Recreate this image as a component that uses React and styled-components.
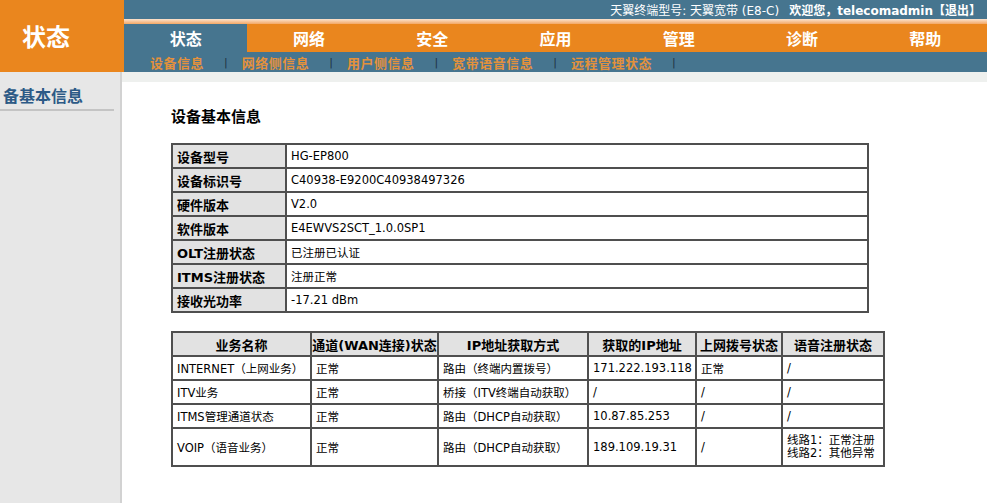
import React from 'react';
import styled, { createGlobalStyle } from 'styled-components';

const CN = `"DejaVu Sans", "Noto Sans CJK SC", sans-serif`;

const GlobalStyle = createGlobalStyle`
  html, body {
    margin: 0;
    padding: 0;
    background: #ffffff;
    font-family: ${CN};
    font-size: 12px;
    color: #000;
  }
`;

const ORANGE = '#ea861e';
const BLUE = '#46758f';

const tabs = ['状态', '网络', '安全', '应用', '管理', '诊断', '帮助'];
const subItems = ['设备信息', '网络侧信息', '用户侧信息', '宽带语音信息', '远程管理状态'];

const basicInfo = [
  ['设备型号', 'HG-EP800'],
  ['设备标识号', 'C40938-E9200C40938497326'],
  ['硬件版本', 'V2.0'],
  ['软件版本', 'E4EWVS2SCT_1.0.0SP1'],
  ['OLT注册状态', '已注册已认证'],
  ['ITMS注册状态', '注册正常'],
  ['接收光功率', '-17.21 dBm'],
];

const serviceCols = [
  ['业务名称', 139],
  ['通道(WAN连接)状态', 127],
  ['IP地址获取方式', 150],
  ['获取的IP地址', 108],
  ['上网拨号状态', 86],
  ['语音注册状态', 102],
];

const services = [
  ['INTERNET（上网业务）', '正常', '路由（终端内置拨号）', '171.222.193.118', '正常', '/'],
  ['ITV业务', '正常', '桥接（ITV终端自动获取）', '/', '/', '/'],
  ['ITMS管理通道状态', '正常', '路由（DHCP自动获取）', '10.87.85.253', '/', '/'],
  ['VOIP（语音业务）', '正常', '路由（DHCP自动获取）', '189.109.19.31', '/', ['线路1：正常注册', '线路2：其他异常']],
];

export default function App() {
  return (
    <Page>
      <GlobalStyle />
      <Header>
        <Logo>状态</Logo>
        <HeaderRight>
          <TopBar>
            <span>天翼终端型号: 天翼宽带 (E8-C)</span>
            <Welcome>欢迎您，telecomadmin【退出】</Welcome>
          </TopBar>
          <Strip />
          <Tabs>
            {tabs.map((t, i) => (
              <Tab key={t} active={i === 0}>{t}</Tab>
            ))}
          </Tabs>
          <SubNav>
            {subItems.map((s) => (
              <SubItem key={s}>
                <SubLink>{s}</SubLink>
                <Sep>|</Sep>
              </SubItem>
            ))}
          </SubNav>
        </HeaderRight>
      </Header>
      <Body>
        <Sidebar>
          <SideTitle>备基本信息</SideTitle>
        </Sidebar>
        <Main>
          <GrayStrip />
          <Content>
            <Title>设备基本信息</Title>
            <InfoTable>
              <tbody>
                {basicInfo.map(([k, v]) => (
                  <tr key={k}>
                    <LabelCell>{k}</LabelCell>
                    <ValueCell>{v}</ValueCell>
                  </tr>
                ))}
              </tbody>
            </InfoTable>
            <ServiceTable>
              <colgroup>
                {serviceCols.map(([h, w]) => (
                  <col key={h} style={{ width: w }} />
                ))}
              </colgroup>
              <thead>
                <tr>
                  {serviceCols.map(([h]) => (
                    <HeadCell key={h}>{h}</HeadCell>
                  ))}
                </tr>
              </thead>
              <tbody>
                {services.map((row) => (
                  <ServiceRow key={row[0]} tall={Array.isArray(row[5])}>
                    {row.map((c, i) => (
                      <ValueCell key={i}>
                        {Array.isArray(c) ? (
                          <Lines>
                            {c.map((l) => (
                              <div key={l}>{l}</div>
                            ))}
                          </Lines>
                        ) : (
                          c
                        )}
                      </ValueCell>
                    ))}
                  </ServiceRow>
                ))}
              </tbody>
            </ServiceTable>
          </Content>
        </Main>
      </Body>
    </Page>
  );
}

const Page = styled.div`
  width: 987px;
  height: 503px;
  display: flex;
  flex-direction: column;
  overflow: hidden;
`;

const Header = styled.div`
  display: flex;
  height: 72px;
`;

const Logo = styled.div`
  width: 124px;
  background: ${ORANGE};
  color: #fff;
  font-size: 24px;
  font-weight: bold;
  display: flex;
  align-items: center;
  padding: 0 0 2px 22px;
  box-sizing: border-box;
`;

const HeaderRight = styled.div`
  flex: 1;
  display: flex;
  flex-direction: column;
`;

const TopBar = styled.div`
  height: 19px;
  background: ${BLUE};
  color: #fff;
  font-size: 12px;
  display: flex;
  align-items: center;
  justify-content: flex-end;
  padding-right: 6px;
  gap: 10px;
  white-space: nowrap;
`;

const Welcome = styled.span`
  font-weight: bold;
`;

const Strip = styled.div`
  height: 5px;
  background: linear-gradient(#fbe3cf, #f3a866);
`;

const Tabs = styled.div`
  height: 28px;
  display: grid;
  grid-template-columns: repeat(7, 1fr);
  background: ${ORANGE};
`;

const Tab = styled.div`
  background: ${(p) => (p.active ? BLUE : ORANGE)};
  color: #fff;
  font-size: 16px;
  font-weight: bold;
  display: flex;
  align-items: center;
  justify-content: center;
`;

const SubNav = styled.div`
  height: 20px;
  background: ${BLUE};
  display: flex;
  align-items: center;
  padding-left: 26px;
`;

const SubItem = styled.div`
  display: flex;
  align-items: center;
`;

const SubLink = styled.span`
  color: #e3913c;
  font-size: 13px;
  font-weight: bold;
  letter-spacing: 0.5px;
`;

const Sep = styled.span`
  color: #1f3344;
  font-size: 11px;
  margin: 0 14px 0 20px;
`;

const Body = styled.div`
  flex: 1;
  display: flex;
`;

const Sidebar = styled.div`
  width: 120px;
  background: #e7e7e7;
  border-right: 2px solid #d2d2d2;
  overflow: hidden;
  padding-top: 11px;
`;

const SideTitle = styled.div`
  width: 111px;
  padding: 0 0 2px 3px;
  color: #2c5a86;
  font-size: 16px;
  font-weight: bold;
  white-space: nowrap;
  border-bottom: 2px solid #c4c4c4;
`;

const Main = styled.div`
  flex: 1;
  display: flex;
  flex-direction: column;
`;

const GrayStrip = styled.div`
  height: 10px;
  background: #eef0ee;
`;

const Content = styled.div`
  flex: 1;
  background: #fff;
  padding: 23px 0 0 49px;
`;

const Title = styled.div`
  font-size: 15px;
  font-weight: bold;
  margin-bottom: 17px;
`;

const InfoTable = styled.table`
  width: 698px;
  border-collapse: collapse;
  border: 2px solid #4a4a4a;
  margin-bottom: 18px;
  tr {
    height: 24px;
  }
`;

const LabelCell = styled.td`
  width: 104px;
  background: #e2e2e2;
  border: 2px solid #4f4f4f;
  padding: 0 4px;
  font-size: 13px;
  font-weight: bold;
  white-space: nowrap;
`;

const ValueCell = styled.td`
  border: 2px solid #4f4f4f;
  padding: 0 3px 0 4px;
  font-size: 11.5px;
  white-space: nowrap;
`;

const ServiceTable = styled.table`
  width: 712px;
  table-layout: fixed;
  border-collapse: collapse;
  border: 2px solid #4a4a4a;
  thead tr {
    height: 24px;
  }
`;

const HeadCell = styled.th`
  background: #e2e2e2;
  border: 2px solid #4f4f4f;
  font-size: 13px;
  font-weight: bold;
  text-align: center;
  white-space: nowrap;
  padding: 0;
`;

const ServiceRow = styled.tr`
  height: ${(p) => (p.tall ? 38 : 24)}px;
`;

const Lines = styled.div`
  line-height: 13px;
`;
